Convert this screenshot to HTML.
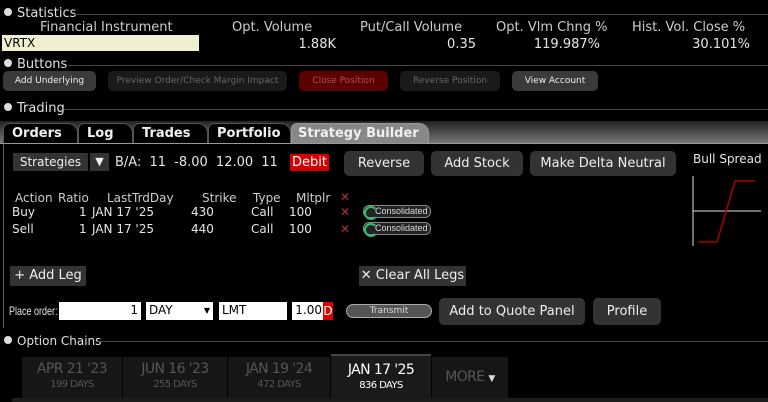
<!DOCTYPE html>
<html><head><meta charset="utf-8"><style>
*{margin:0;padding:0;box-sizing:border-box}
body{width:768px;height:402px;background:#000;color:#e6e6e6;font-family:"DejaVu Sans","Liberation Sans",sans-serif;font-size:12px;position:relative;overflow:hidden}
.a{position:absolute;white-space:nowrap}
.hdr{position:absolute;left:0;right:0;height:14px;font-size:13px;color:#e0e0e0}
.hdr .t{position:absolute;left:4px;top:0}
.hdr .t:before{content:"";display:inline-block;width:8px;height:8px;border-radius:50%;background:#ddd;margin-right:5px;vertical-align:1px}
.hdr .l{position:absolute;top:8px;right:0;height:1px;background:#aaa;border-bottom:1px solid #444}
.btn{position:absolute;border-radius:5px;text-align:center;font-size:9px}
.b2{position:absolute;background:#333;border-radius:5px;text-align:center;color:#eee;font-size:13px}
.tab{position:absolute;top:123px;height:20px;border:1px solid #555;border-bottom:none;border-radius:6px 10px 0 0;background:#000;color:#f0f0f0;font-weight:bold;font-size:13px;padding:2px 0 0 8px}
.ch{position:absolute;top:357px;height:41px;background:#161616;text-align:center;color:#555;font-size:14px;padding-top:5px;line-height:15px}
.ch small{display:block;font-size:10px}
.x{color:#b03030;font-weight:bold}
.cons{position:absolute;width:68px;height:13px;border:1px solid #888;border-radius:6px;background:#222;font-family:"Liberation Sans",sans-serif;font-size:9px;color:#ddd;padding-left:11px;line-height:11px}
.cons:before{content:"";position:absolute;left:0;top:0;width:10px;height:10px;border:2px solid #2ec06a;border-right-color:transparent;border-radius:50%}
.inp{position:absolute;top:302px;height:18px;background:#fff;color:#000;font-size:12px;padding:1px 3px}
.c{letter-spacing:-0.6px}
</style></head><body>
<div class="hdr" style="top:6px"><span class="t">Statistics</span><div class="l" style="left:74px"></div></div>
<div class="a" style="left:40px;top:20px;font-size:13px;color:#ccc">Financial Instrument</div>
<div class="a" style="left:232px;top:20px;font-size:13px;color:#ccc">Opt. Volume</div>
<div class="a" style="left:360px;top:20px;font-size:13px;color:#ccc">Put/Call Volume</div>
<div class="a" style="left:496px;top:20px;font-size:13px;color:#ccc">Opt. Vlm Chng %</div>
<div class="a" style="left:632px;top:20px;font-size:13px;color:#ccc">Hist. Vol. Close %</div>
<div class="a" style="left:2px;top:35px;width:197px;height:16px;background:#f0efcf;color:#000;padding-left:2px;font-size:12px;line-height:16px">VRTX</div>
<div class="a" style="right:432px;top:37px;font-size:13px">1.88K</div>
<div class="a" style="right:292px;top:37px;font-size:13px">0.35</div>
<div class="a" style="right:168px;top:37px;font-size:13px">119.987%</div>
<div class="a" style="right:18px;top:37px;font-size:13px">30.101%</div>

<div class="hdr" style="top:57px"><span class="t">Buttons</span><div class="l" style="left:68px"></div></div>
<div class="btn" style="left:3px;top:71px;width:93px;height:20px;line-height:20px;background:#3a3a3a;color:#eee">Add Underlying</div>
<div class="btn" style="left:108px;top:71px;width:179px;height:20px;line-height:20px;background:#1a1a1a;color:#666">Preview Order/Check Margin Impact</div>
<div class="btn" style="left:299px;top:71px;width:89px;height:20px;line-height:20px;background:#5c0000;color:#a55">Close Position</div>
<div class="btn" style="left:400px;top:71px;width:100px;height:20px;line-height:20px;background:#1a1a1a;color:#666">Reverse Position</div>
<div class="btn" style="left:512px;top:71px;width:86px;height:20px;line-height:20px;background:#3a3a3a;color:#eee">View Account</div>

<div class="hdr" style="top:101px"><span class="t">Trading</span><div class="l" style="left:64px"></div></div>
<div class="a" style="left:0;top:121px;width:768px;height:22px;background:linear-gradient(#222,#555 60%,#777)"></div>
<div class="tab" style="left:3px;width:75px">Orders</div>
<div class="tab" style="left:78px;width:55px">Log</div>
<div class="tab" style="left:133px;width:75px">Trades</div>
<div class="tab" style="left:208px;width:83px">Portfolio</div>
<div class="tab" style="left:291px;width:138px;background:#888;border-color:#999;padding-left:6px">Strategy Builder</div>
<div class="a" style="left:0;top:143px;width:768px;height:1px;background:#999"></div>
<div class="a" style="left:3px;top:144px;width:1px;height:184px;background:#666"></div>

<div class="b2" style="left:13px;top:153px;width:75px;height:18px;line-height:18px;border-radius:0;background:#333;font-size:12px">Strategies</div>
<div class="b2" style="left:90px;top:153px;width:19px;height:18px;line-height:18px;border-radius:0;font-size:11px">▼</div>
<div class="a" style="left:115px;top:155px;font-size:13px;word-spacing:4px">B/A: 11 -8.00 12.00 11</div>
<div class="a" style="left:290px;top:154px;width:39px;height:17px;background:#d40000;color:#fff;text-align:center;font-size:13px;line-height:17px">Debit</div>
<div class="b2" style="left:344px;top:151px;width:80px;height:25px;line-height:25px">Reverse</div>
<div class="b2" style="left:431px;top:151px;width:92px;height:25px;line-height:25px">Add Stock</div>
<div class="b2" style="left:530px;top:151px;width:146px;height:25px;line-height:25px">Make Delta Neutral</div>
<div class="a" style="left:693px;top:152px;font-size:12px">Bull Spread</div>
<svg class="a" style="left:690px;top:174px" width="78" height="76"><line x1="3" y1="2" x2="3" y2="72" stroke="#ddd" stroke-width="1"/><line x1="3" y1="37" x2="71" y2="37" stroke="#ddd"/><polyline points="8,68 27,68 45,7 65,7" fill="none" stroke="#a00" stroke-width="1.5"/></svg>

<div class="a" style="left:15px;top:191px;font-size:12px;color:#ccc">Action</div>
<div class="a" style="left:58px;top:191px;font-size:12px;color:#ccc">Ratio</div>
<div class="a" style="left:107px;top:191px;font-size:12px;color:#ccc">LastTrdDay</div>
<div class="a" style="left:202px;top:191px;font-size:12px;color:#ccc">Strike</div>
<div class="a" style="left:253px;top:191px;font-size:12px;color:#ccc">Type</div>
<div class="a" style="left:296px;top:191px;font-size:12px;color:#ccc">Mltplr</div>
<div class="a x" style="left:340px;top:190px">✕</div>
<div class="a" style="left:12px;top:205px">Buy</div><div class="a" style="left:79px;top:205px">1</div><div class="a" style="left:92px;top:205px">JAN 17 '25</div><div class="a" style="left:191px;top:205px">430</div><div class="a" style="left:251px;top:205px">Call</div><div class="a" style="left:289px;top:205px">100</div><div class="a x" style="left:340px;top:205px">✕</div><div class="cons" style="left:363px;top:205px">Consolidated</div>
<div class="a" style="left:12px;top:222px">Sell</div><div class="a" style="left:79px;top:222px">1</div><div class="a" style="left:92px;top:222px">JAN 17 '25</div><div class="a" style="left:191px;top:222px">440</div><div class="a" style="left:251px;top:222px">Call</div><div class="a" style="left:289px;top:222px">100</div><div class="a x" style="left:340px;top:222px">✕</div><div class="cons" style="left:363px;top:222px">Consolidated</div>

<div class="b2" style="left:10px;top:266px;width:76px;height:20px;line-height:20px;border-radius:0;font-size:13px">+ Add Leg</div>
<div class="b2" style="left:359px;top:266px;width:107px;height:20px;line-height:20px;border-radius:0;font-size:13px">✕ Clear All Legs</div>

<div class="a" style="left:9px;top:304px;font-family:'Liberation Sans',sans-serif;font-size:12px;transform:scaleX(0.75);transform-origin:0 0;display:inline-block">Place order:</div>
<div class="inp" style="left:59px;width:82px;text-align:right">1</div>
<div class="inp" style="left:146px;width:67px">DAY<span style="float:right;font-size:8px;margin-top:3px">▼</span></div>
<div class="inp" style="left:219px;width:68px">LMT</div>
<div class="inp" style="left:292px;width:31px;text-align:right;padding-right:1px">1.00</div>
<div class="a" style="left:323px;top:302px;width:10px;height:18px;background:#d00;color:#fff;font-size:12px;text-align:center;line-height:18px">D</div>
<div class="a" style="left:346px;top:304px;width:86px;height:14px;border:1px solid #aaa;border-radius:7px;background:#555;color:#ddd;font-size:9px;text-align:center;line-height:12px">Transmit</div>
<div class="b2" style="left:439px;top:298px;width:146px;height:27px;line-height:27px">Add to Quote Panel</div>
<div class="b2" style="left:593px;top:298px;width:68px;height:27px;line-height:27px">Profile</div>

<div class="hdr" style="top:334px"><span class="t" style="font-size:12px">Option Chains</span><div class="l" style="left:98px;top:7px"></div></div>
<div class="ch c" style="left:22px;width:100px">APR 21 '23<small>199 DAYS</small></div>
<div class="ch c" style="left:123px;width:104px">JUN 16 '23<small>255 DAYS</small></div>
<div class="ch c" style="left:228px;width:102px">JAN 19 '24<small>472 DAYS</small></div>
<div class="ch c" style="left:331px;top:354px;height:46px;width:100px;background:#1a1a1a;border-top:2px solid #444;color:#fff;padding-top:7px">JAN 17 '25<small>836 DAYS</small></div>
<div class="ch c" style="left:432px;width:76px;line-height:28px;padding-top:6px">MORE <span style="font-size:9px;color:#ddd">▼</span></div>
<div class="a" style="left:12px;top:398px;width:756px;height:4px;background:#1c1c1c"></div>
</body></html>
